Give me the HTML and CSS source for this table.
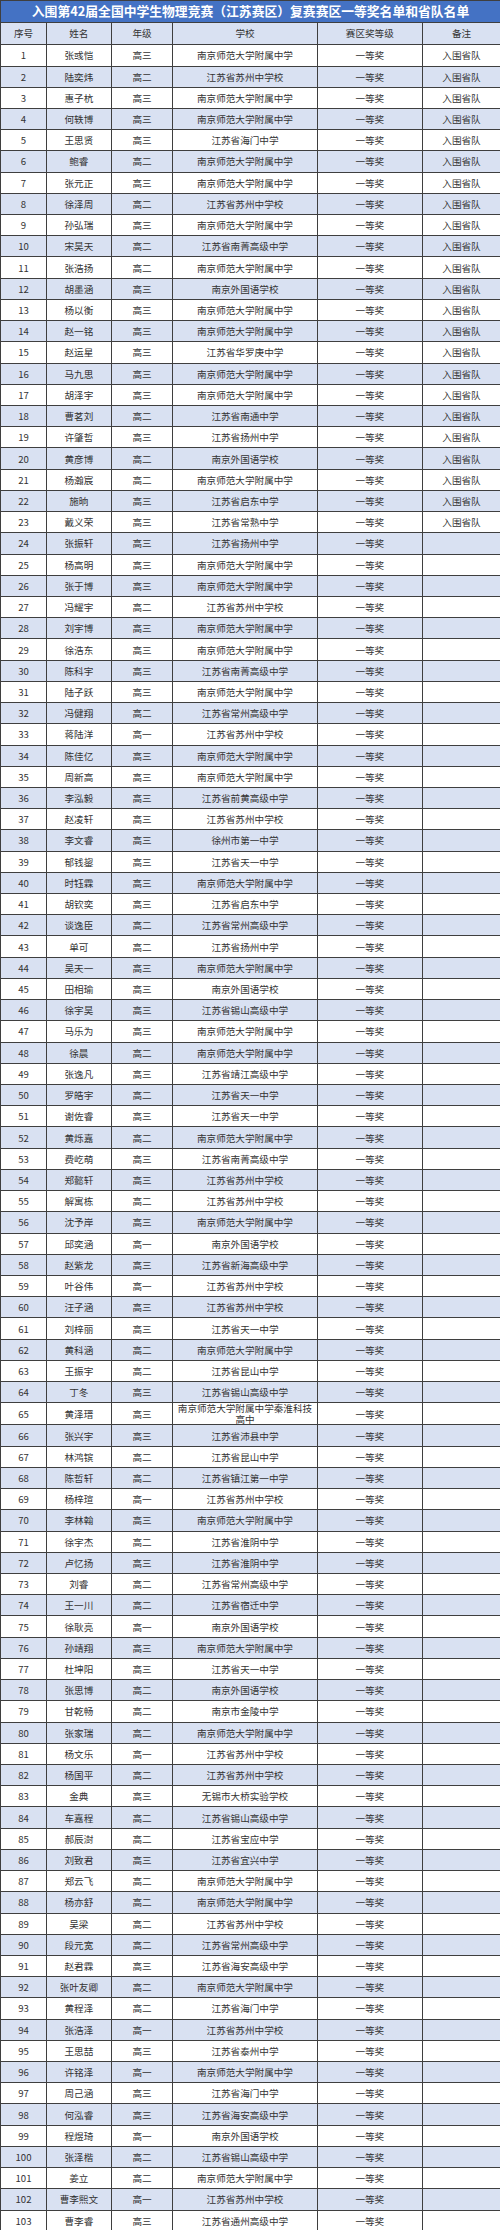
FILE: index.html
```html
<!DOCTYPE html>
<html lang="zh-CN">
<head>
<meta charset="utf-8">
<title>入围第42届全国中学生物理竞赛（江苏赛区）复赛赛区一等奖名单和省队名单</title>
<link rel="stylesheet" href="styles.css">
</head>
<body>
<table class="list">
<colgroup><col class="c-no"><col class="c-name"><col class="c-grade"><col class="c-school"><col class="c-award"><col class="c-note"></colgroup>
<thead>
<tr class="title"><th colspan="6">入围第42届全国中学生物理竞赛（江苏赛区）复赛赛区一等奖名单和省队名单</th></tr>
<tr class="head"><th>序号</th><th>姓名</th><th>年级</th><th>学校</th><th>赛区奖等级</th><th>备注</th></tr>
</thead>
<tbody>
<tr><td>1</td><td>张彧恺</td><td>高三</td><td>南京师范大学附属中学</td><td>一等奖</td><td>入围省队</td></tr>
<tr><td>2</td><td>陆奕炜</td><td>高二</td><td>江苏省苏州中学校</td><td>一等奖</td><td>入围省队</td></tr>
<tr><td>3</td><td>惠子杭</td><td>高三</td><td>南京师范大学附属中学</td><td>一等奖</td><td>入围省队</td></tr>
<tr><td>4</td><td>何轶博</td><td>高三</td><td>南京师范大学附属中学</td><td>一等奖</td><td>入围省队</td></tr>
<tr><td>5</td><td>王思贤</td><td>高三</td><td>江苏省海门中学</td><td>一等奖</td><td>入围省队</td></tr>
<tr><td>6</td><td>鲍睿</td><td>高二</td><td>南京师范大学附属中学</td><td>一等奖</td><td>入围省队</td></tr>
<tr><td>7</td><td>张元正</td><td>高三</td><td>南京师范大学附属中学</td><td>一等奖</td><td>入围省队</td></tr>
<tr><td>8</td><td>徐泽周</td><td>高二</td><td>江苏省苏州中学校</td><td>一等奖</td><td>入围省队</td></tr>
<tr><td>9</td><td>孙弘瑞</td><td>高三</td><td>南京师范大学附属中学</td><td>一等奖</td><td>入围省队</td></tr>
<tr><td>10</td><td>宋昊天</td><td>高二</td><td>江苏省南菁高级中学</td><td>一等奖</td><td>入围省队</td></tr>
<tr><td>11</td><td>张浩扬</td><td>高二</td><td>南京师范大学附属中学</td><td>一等奖</td><td>入围省队</td></tr>
<tr><td>12</td><td>胡墨涵</td><td>高三</td><td>南京外国语学校</td><td>一等奖</td><td>入围省队</td></tr>
<tr><td>13</td><td>杨以衡</td><td>高三</td><td>南京师范大学附属中学</td><td>一等奖</td><td>入围省队</td></tr>
<tr><td>14</td><td>赵一铭</td><td>高三</td><td>南京师范大学附属中学</td><td>一等奖</td><td>入围省队</td></tr>
<tr><td>15</td><td>赵运星</td><td>高三</td><td>江苏省华罗庚中学</td><td>一等奖</td><td>入围省队</td></tr>
<tr><td>16</td><td>马九思</td><td>高三</td><td>南京师范大学附属中学</td><td>一等奖</td><td>入围省队</td></tr>
<tr><td>17</td><td>胡泽宇</td><td>高三</td><td>南京师范大学附属中学</td><td>一等奖</td><td>入围省队</td></tr>
<tr><td>18</td><td>曹茗刘</td><td>高二</td><td>江苏省南通中学</td><td>一等奖</td><td>入围省队</td></tr>
<tr><td>19</td><td>许肇哲</td><td>高三</td><td>江苏省扬州中学</td><td>一等奖</td><td>入围省队</td></tr>
<tr><td>20</td><td>黄彦博</td><td>高二</td><td>南京外国语学校</td><td>一等奖</td><td>入围省队</td></tr>
<tr><td>21</td><td>杨瀚宸</td><td>高二</td><td>南京师范大学附属中学</td><td>一等奖</td><td>入围省队</td></tr>
<tr><td>22</td><td>施晌</td><td>高三</td><td>江苏省启东中学</td><td>一等奖</td><td>入围省队</td></tr>
<tr><td>23</td><td>戴义荣</td><td>高三</td><td>江苏省常熟中学</td><td>一等奖</td><td>入围省队</td></tr>
<tr><td>24</td><td>张振轩</td><td>高三</td><td>江苏省扬州中学</td><td>一等奖</td><td></td></tr>
<tr><td>25</td><td>杨高明</td><td>高三</td><td>南京师范大学附属中学</td><td>一等奖</td><td></td></tr>
<tr><td>26</td><td>张于博</td><td>高三</td><td>南京师范大学附属中学</td><td>一等奖</td><td></td></tr>
<tr><td>27</td><td>冯耀宇</td><td>高二</td><td>江苏省苏州中学校</td><td>一等奖</td><td></td></tr>
<tr><td>28</td><td>刘宇博</td><td>高三</td><td>南京师范大学附属中学</td><td>一等奖</td><td></td></tr>
<tr><td>29</td><td>徐浩东</td><td>高三</td><td>南京师范大学附属中学</td><td>一等奖</td><td></td></tr>
<tr><td>30</td><td>陈科宇</td><td>高三</td><td>江苏省南菁高级中学</td><td>一等奖</td><td></td></tr>
<tr><td>31</td><td>陆子跃</td><td>高三</td><td>南京师范大学附属中学</td><td>一等奖</td><td></td></tr>
<tr><td>32</td><td>冯健翔</td><td>高二</td><td>江苏省常州高级中学</td><td>一等奖</td><td></td></tr>
<tr><td>33</td><td>蒋陆洋</td><td>高一</td><td>江苏省苏州中学校</td><td>一等奖</td><td></td></tr>
<tr><td>34</td><td>陈佳亿</td><td>高三</td><td>南京师范大学附属中学</td><td>一等奖</td><td></td></tr>
<tr><td>35</td><td>周新高</td><td>高三</td><td>南京师范大学附属中学</td><td>一等奖</td><td></td></tr>
<tr><td>36</td><td>李泓毅</td><td>高三</td><td>江苏省前黄高级中学</td><td>一等奖</td><td></td></tr>
<tr><td>37</td><td>赵凌轩</td><td>高三</td><td>江苏省苏州中学校</td><td>一等奖</td><td></td></tr>
<tr><td>38</td><td>李文睿</td><td>高三</td><td>徐州市第一中学</td><td>一等奖</td><td></td></tr>
<tr><td>39</td><td>郁钱鋆</td><td>高三</td><td>江苏省天一中学</td><td>一等奖</td><td></td></tr>
<tr><td>40</td><td>时钰霖</td><td>高三</td><td>南京师范大学附属中学</td><td>一等奖</td><td></td></tr>
<tr><td>41</td><td>胡钦奕</td><td>高三</td><td>江苏省启东中学</td><td>一等奖</td><td></td></tr>
<tr><td>42</td><td>谈逸臣</td><td>高二</td><td>江苏省常州高级中学</td><td>一等奖</td><td></td></tr>
<tr><td>43</td><td>单可</td><td>高二</td><td>江苏省扬州中学</td><td>一等奖</td><td></td></tr>
<tr><td>44</td><td>吴天一</td><td>高三</td><td>南京师范大学附属中学</td><td>一等奖</td><td></td></tr>
<tr><td>45</td><td>田相瑜</td><td>高三</td><td>南京外国语学校</td><td>一等奖</td><td></td></tr>
<tr><td>46</td><td>徐宇昊</td><td>高三</td><td>江苏省锡山高级中学</td><td>一等奖</td><td></td></tr>
<tr><td>47</td><td>马乐为</td><td>高三</td><td>南京师范大学附属中学</td><td>一等奖</td><td></td></tr>
<tr><td>48</td><td>徐晨</td><td>高二</td><td>南京师范大学附属中学</td><td>一等奖</td><td></td></tr>
<tr><td>49</td><td>张逸凡</td><td>高三</td><td>江苏省靖江高级中学</td><td>一等奖</td><td></td></tr>
<tr><td>50</td><td>罗皓宇</td><td>高二</td><td>江苏省天一中学</td><td>一等奖</td><td></td></tr>
<tr><td>51</td><td>谢佐睿</td><td>高三</td><td>江苏省天一中学</td><td>一等奖</td><td></td></tr>
<tr><td>52</td><td>黄烁嘉</td><td>高二</td><td>南京师范大学附属中学</td><td>一等奖</td><td></td></tr>
<tr><td>53</td><td>费屹萌</td><td>高三</td><td>江苏省南菁高级中学</td><td>一等奖</td><td></td></tr>
<tr><td>54</td><td>郑懿轩</td><td>高三</td><td>江苏省苏州中学校</td><td>一等奖</td><td></td></tr>
<tr><td>55</td><td>解寓栋</td><td>高二</td><td>江苏省苏州中学校</td><td>一等奖</td><td></td></tr>
<tr><td>56</td><td>沈予岸</td><td>高三</td><td>南京师范大学附属中学</td><td>一等奖</td><td></td></tr>
<tr><td>57</td><td>邱奕涵</td><td>高一</td><td>南京外国语学校</td><td>一等奖</td><td></td></tr>
<tr><td>58</td><td>赵紫龙</td><td>高三</td><td>江苏省新海高级中学</td><td>一等奖</td><td></td></tr>
<tr><td>59</td><td>叶谷伟</td><td>高一</td><td>江苏省苏州中学校</td><td>一等奖</td><td></td></tr>
<tr><td>60</td><td>汪子涵</td><td>高三</td><td>江苏省苏州中学校</td><td>一等奖</td><td></td></tr>
<tr><td>61</td><td>刘梓丽</td><td>高三</td><td>江苏省天一中学</td><td>一等奖</td><td></td></tr>
<tr><td>62</td><td>黄科涵</td><td>高二</td><td>南京师范大学附属中学</td><td>一等奖</td><td></td></tr>
<tr><td>63</td><td>王振宇</td><td>高二</td><td>江苏省昆山中学</td><td>一等奖</td><td></td></tr>
<tr><td>64</td><td>丁冬</td><td>高三</td><td>江苏省锡山高级中学</td><td>一等奖</td><td></td></tr>
<tr><td>65</td><td>黄泽瑨</td><td>高三</td><td class="wrap">南京师范大学附属中学秦淮科技高中</td><td>一等奖</td><td></td></tr>
<tr><td>66</td><td>张兴宇</td><td>高三</td><td>江苏省沛县中学</td><td>一等奖</td><td></td></tr>
<tr><td>67</td><td>林鸿镔</td><td>高二</td><td>江苏省昆山中学</td><td>一等奖</td><td></td></tr>
<tr><td>68</td><td>陈哲轩</td><td>高二</td><td>江苏省镇江第一中学</td><td>一等奖</td><td></td></tr>
<tr><td>69</td><td>杨梓瑄</td><td>高一</td><td>江苏省苏州中学校</td><td>一等奖</td><td></td></tr>
<tr><td>70</td><td>李林翰</td><td>高三</td><td>南京师范大学附属中学</td><td>一等奖</td><td></td></tr>
<tr><td>71</td><td>徐宇杰</td><td>高二</td><td>江苏省淮阴中学</td><td>一等奖</td><td></td></tr>
<tr><td>72</td><td>卢忆扬</td><td>高三</td><td>江苏省淮阴中学</td><td>一等奖</td><td></td></tr>
<tr><td>73</td><td>刘睿</td><td>高二</td><td>江苏省常州高级中学</td><td>一等奖</td><td></td></tr>
<tr><td>74</td><td>王一川</td><td>高二</td><td>江苏省宿迁中学</td><td>一等奖</td><td></td></tr>
<tr><td>75</td><td>徐耿亮</td><td>高一</td><td>南京外国语学校</td><td>一等奖</td><td></td></tr>
<tr><td>76</td><td>孙靖翔</td><td>高三</td><td>南京师范大学附属中学</td><td>一等奖</td><td></td></tr>
<tr><td>77</td><td>杜坤阳</td><td>高三</td><td>江苏省天一中学</td><td>一等奖</td><td></td></tr>
<tr><td>78</td><td>张思博</td><td>高二</td><td>南京外国语学校</td><td>一等奖</td><td></td></tr>
<tr><td>79</td><td>甘乾畅</td><td>高二</td><td>南京市金陵中学</td><td>一等奖</td><td></td></tr>
<tr><td>80</td><td>张家瑞</td><td>高二</td><td>南京师范大学附属中学</td><td>一等奖</td><td></td></tr>
<tr><td>81</td><td>杨文乐</td><td>高一</td><td>江苏省苏州中学校</td><td>一等奖</td><td></td></tr>
<tr><td>82</td><td>杨国平</td><td>高二</td><td>江苏省苏州中学校</td><td>一等奖</td><td></td></tr>
<tr><td>83</td><td>金典</td><td>高三</td><td>无锡市大桥实验学校</td><td>一等奖</td><td></td></tr>
<tr><td>84</td><td>车嘉程</td><td>高二</td><td>江苏省锡山高级中学</td><td>一等奖</td><td></td></tr>
<tr><td>85</td><td>郝辰澍</td><td>高二</td><td>江苏省宝应中学</td><td>一等奖</td><td></td></tr>
<tr><td>86</td><td>刘致君</td><td>高三</td><td>江苏省宜兴中学</td><td>一等奖</td><td></td></tr>
<tr><td>87</td><td>郑云飞</td><td>高二</td><td>南京师范大学附属中学</td><td>一等奖</td><td></td></tr>
<tr><td>88</td><td>杨亦舒</td><td>高二</td><td>南京师范大学附属中学</td><td>一等奖</td><td></td></tr>
<tr><td>89</td><td>吴梁</td><td>高二</td><td>江苏省苏州中学校</td><td>一等奖</td><td></td></tr>
<tr><td>90</td><td>段元宽</td><td>高二</td><td>江苏省常州高级中学</td><td>一等奖</td><td></td></tr>
<tr><td>91</td><td>赵君霖</td><td>高三</td><td>江苏省海安高级中学</td><td>一等奖</td><td></td></tr>
<tr><td>92</td><td>张叶友卿</td><td>高二</td><td>南京师范大学附属中学</td><td>一等奖</td><td></td></tr>
<tr><td>93</td><td>黄程泽</td><td>高二</td><td>江苏省海门中学</td><td>一等奖</td><td></td></tr>
<tr><td>94</td><td>张浩泽</td><td>高一</td><td>江苏省苏州中学校</td><td>一等奖</td><td></td></tr>
<tr><td>95</td><td>王思喆</td><td>高三</td><td>江苏省泰州中学</td><td>一等奖</td><td></td></tr>
<tr><td>96</td><td>许铭泽</td><td>高一</td><td>南京师范大学附属中学</td><td>一等奖</td><td></td></tr>
<tr><td>97</td><td>周己涵</td><td>高三</td><td>江苏省海门中学</td><td>一等奖</td><td></td></tr>
<tr><td>98</td><td>何泓睿</td><td>高三</td><td>江苏省海安高级中学</td><td>一等奖</td><td></td></tr>
<tr><td>99</td><td>程煜琦</td><td>高一</td><td>南京外国语学校</td><td>一等奖</td><td></td></tr>
<tr><td>100</td><td>张泽楷</td><td>高二</td><td>江苏省锡山高级中学</td><td>一等奖</td><td></td></tr>
<tr><td>101</td><td>姜立</td><td>高二</td><td>南京师范大学附属中学</td><td>一等奖</td><td></td></tr>
<tr><td>102</td><td>曹李熙文</td><td>高一</td><td>江苏省苏州中学校</td><td>一等奖</td><td></td></tr>
<tr><td>103</td><td>曹李睿</td><td>高三</td><td>江苏省通州高级中学</td><td>一等奖</td><td></td></tr>
</tbody>
</table>
</body>
</html>
```

FILE: styles.css
```css
html, body {
  margin: 0;
  padding: 0;
  background: #ffffff;
}

.list {
  width: 500px;
  border-collapse: collapse;
  table-layout: fixed;
  font-family: "Noto Sans CJK SC", "Noto Sans", sans-serif;
  font-size: 9.6px;
  color: #333333;
}

.c-no { width: 46px; }
.c-name { width: 64.7px; }
.c-grade { width: 61.6px; }
.c-school { width: 144.4px; }
.c-award { width: 105.3px; }
.c-note { width: 78px; }

.list th,
.list td {
  border: 1px solid #3f3f3f;
  padding: 0;
  text-align: center;
  vertical-align: middle;
  font-weight: normal;
  line-height: 12px;
  white-space: nowrap;
  overflow: visible;
}

.title th {
  height: 20.7px;
  background: #4472c4;
  color: #ffffff;
  font-weight: 700;
  font-size: 12.8px;
  line-height: 16px;
}

.head th {
  height: 21.6px;
  background: #d9e1f2;
  color: #333333;
}

.list tbody tr {
  height: 21.22px;
}

.list tbody tr:nth-child(even) {
  background: #d9e1f2;
}

.list td.wrap {
  white-space: normal;
  line-height: 10.6px;
}
```
